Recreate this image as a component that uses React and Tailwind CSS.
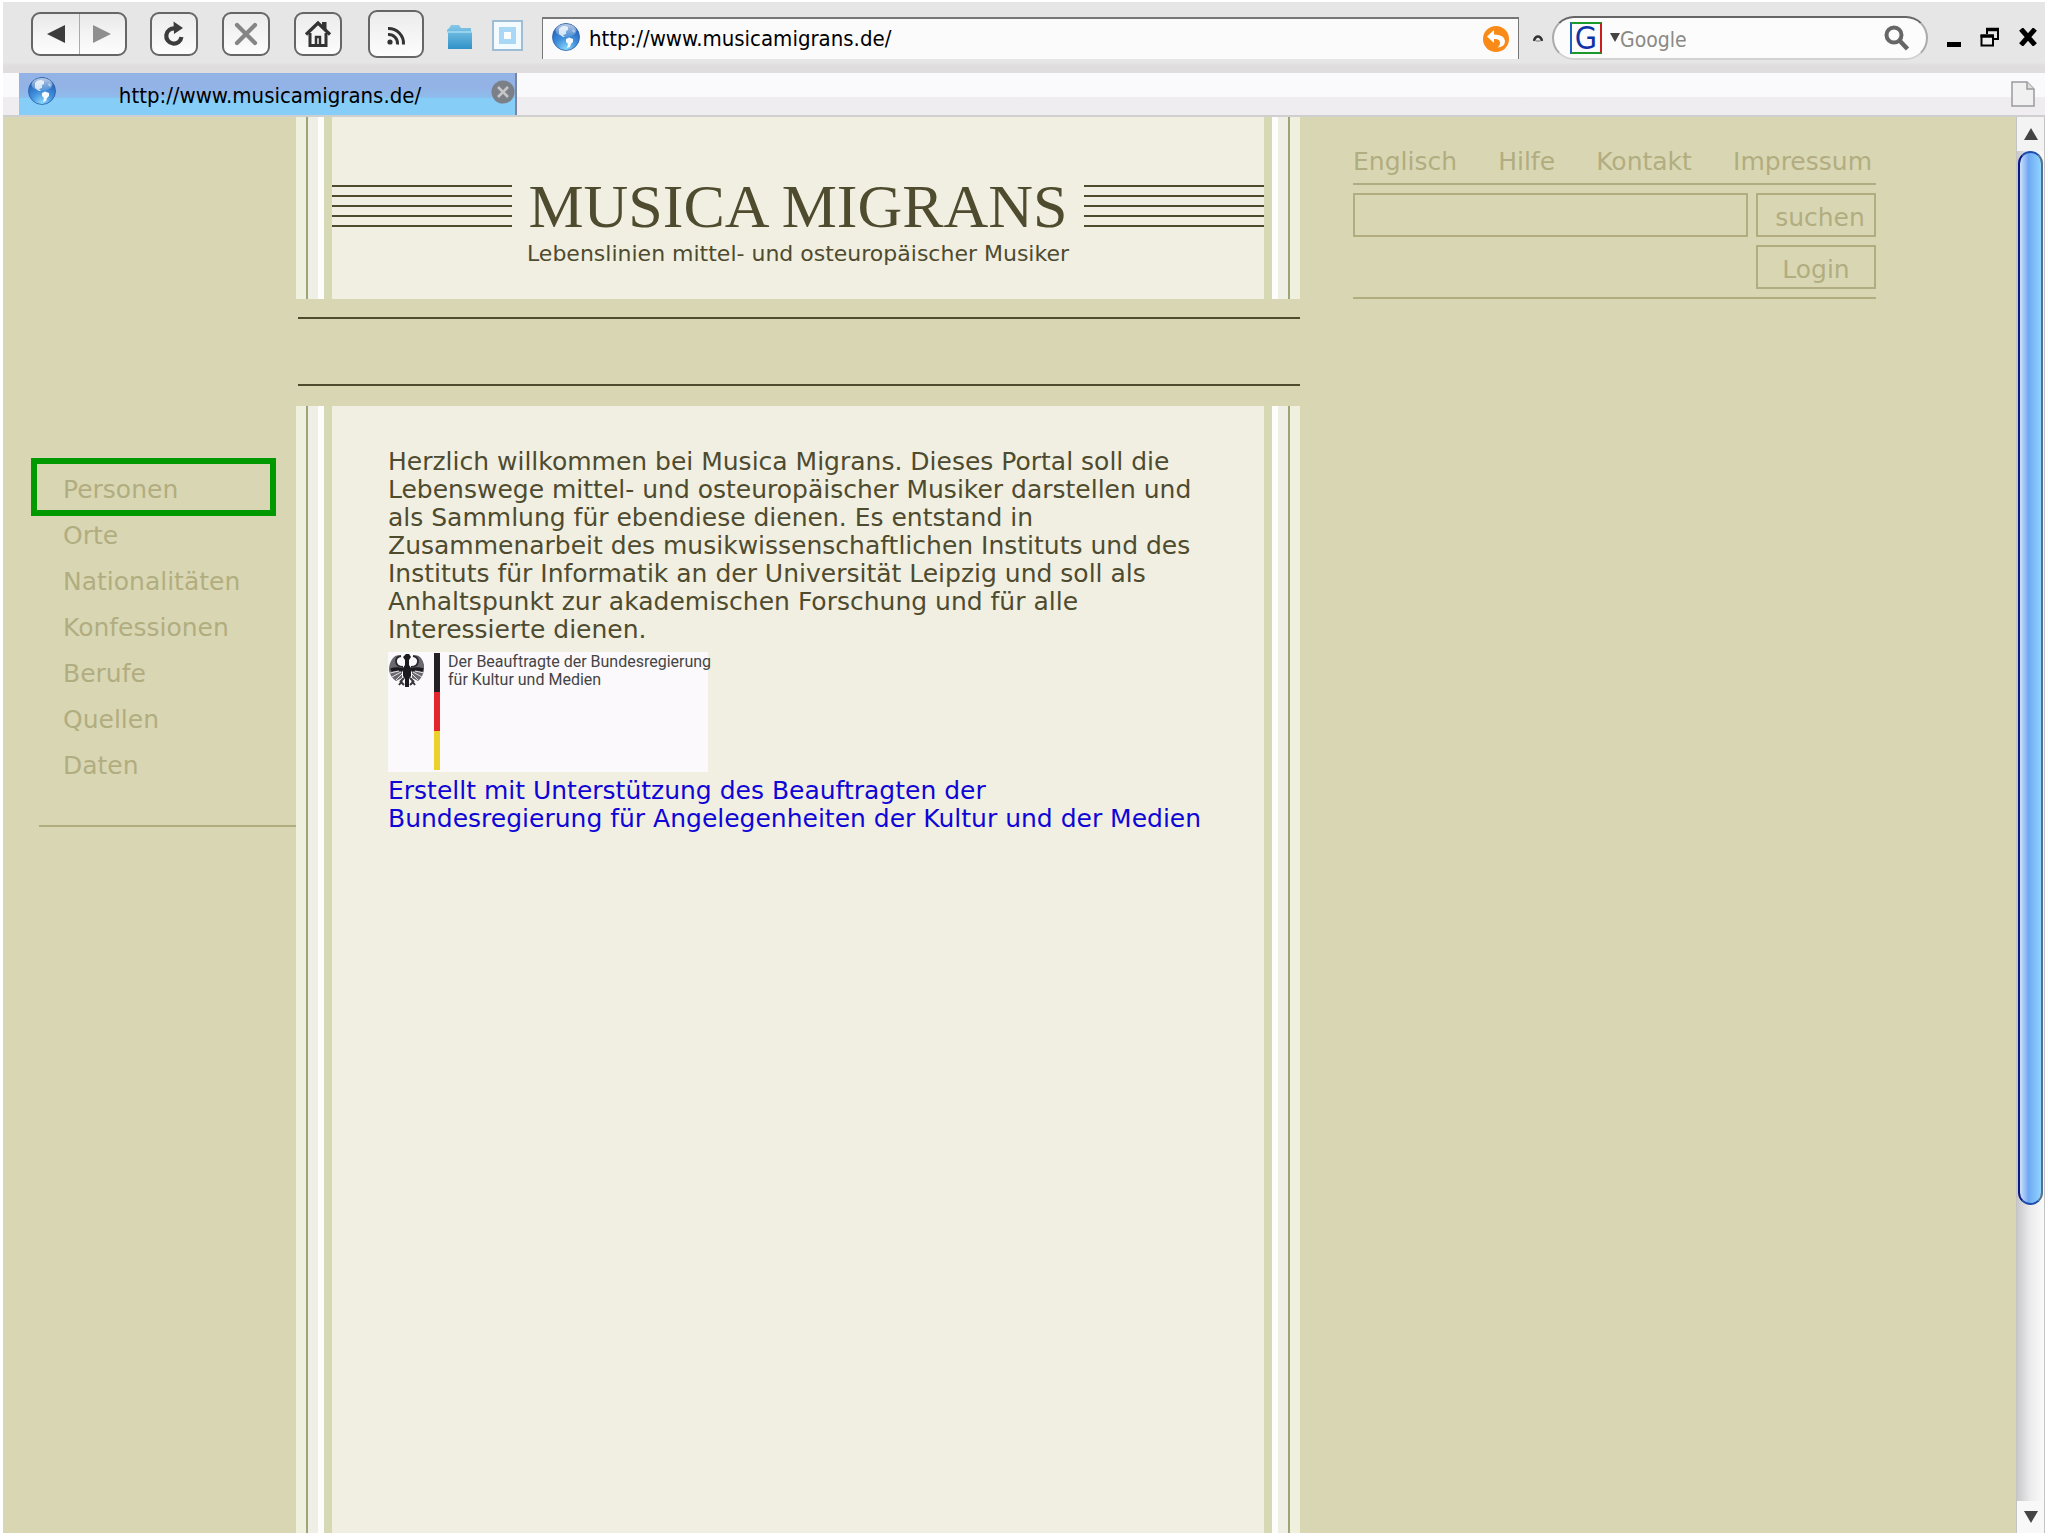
import React from 'react';

const navItems = ['Personen', 'Orte', 'Nationalitäten', 'Konfessionen', 'Berufe', 'Quellen', 'Daten'];
const metaLinks = ['Englisch', 'Hilfe', 'Kontakt', 'Impressum'];

function Globe({ id, className = '' }) {
  return (
    <svg viewBox="0 0 30 30" className={`w-[30px] h-[30px] shrink-0 ${className}`} aria-hidden="true">
      <defs>
        <radialGradient id={id} cx="50%" cy="95%" r="95%">
          <stop offset="0" stopColor="#8ad8fc" />
          <stop offset="0.45" stopColor="#3f8fdc" />
          <stop offset="1" stopColor="#1f56ac" />
        </radialGradient>
        <linearGradient id={`${id}Shine`} x1="0" y1="0" x2="0" y2="1">
          <stop offset="0" stopColor="#fff" stopOpacity="0.7" />
          <stop offset="1" stopColor="#fff" stopOpacity="0.1" />
        </linearGradient>
      </defs>
      <circle cx="15" cy="15" r="13.500" fill={`url(#${id})`} stroke="#2b5da8" strokeWidth="0.800" />
      <path d="M8 7 Q10 4 14 4 L17 5 L17 8 L15 9 L15 12 L12 13 L14 15 L12 15 L8 12 Z" fill="#e4f2fc" opacity="0.85" />
      <path d="M15 17 L18 15.500 L22 17 L22 20 L20 22 L19 25 L16 26 L17 22 L15 20 Z" fill="#f4faff" />
      <path d="M22 7 L24 9 L23 11 L21 9 Z" fill="#b9dcf7" opacity="0.6" />
      <ellipse cx="15" cy="8.500" rx="10.500" ry="6.500" fill={`url(#${id}Shine)`} />
    </svg>
  );
}

function ToolButton({ label, className = '', children }) {
  return (
    <button
      aria-label={label}
      className={`flex items-center justify-center shrink-0 rounded-[9px] border-2 border-[#666] bg-linear-to-b from-[#ececec] via-[#f4f4f4] to-[#fdfdfd] ${className}`}
    >
      {children}
    </button>
  );
}

function Toolbar() {
  return (
    <div className="flex items-center h-[71px] pl-7 pr-2 pb-[2px] bg-linear-to-b from-[#e6e6e6] from-85% to-[#dfddde] to-90%">
      <div className="flex items-center mb-[6px]">
        <div className="flex w-24 h-11 rounded-[9px] border-2 border-[#666] bg-linear-to-b from-[#e9e9e9] via-[#f4f4f4] to-[#fdfdfd]">
          <button aria-label="Zurück" className="flex-1 flex items-center justify-center border-r border-[#aaa]">
            <svg viewBox="0 0 18 18" className="w-[18px] h-[18px]"><path d="M0 9 L18 0 V18 Z" fill="#3c3c3c" /></svg>
          </button>
          <button aria-label="Vorwärts" className="flex-1 flex items-center justify-center">
            <svg viewBox="0 0 18 18" className="w-[18px] h-[18px]"><path d="M18 9 L0 0 V18 Z" fill="#8f8f8f" /></svg>
          </button>
        </div>
        <ToolButton label="Neu laden" className="ml-[23px] w-12 h-11">
          <svg viewBox="0 0 24 26" className="w-6 h-[26px]">
            <path d="M13 7.500 A7.600 7.600 0 1 0 19.400 16" fill="none" stroke="#3c3c3c" strokeWidth="4.200" />
            <path d="M11.500 0.500 L21 7 L12 13 Z" fill="#3c3c3c" />
          </svg>
        </ToolButton>
        <ToolButton label="Anhalten" className="ml-6 w-12 h-11">
          <svg viewBox="0 0 24 24" className="w-6 h-6">
            <path d="M3 3 L21 21 M21 3 L3 21" stroke="#858585" strokeWidth="4.200" strokeLinecap="round" />
          </svg>
        </ToolButton>
        <ToolButton label="Startseite" className="ml-6 w-12 h-11">
          <svg viewBox="0 0 28 28" className="w-7 h-7">
            <path d="M2 14.500 L14 3 L26 14.500" fill="none" stroke="#333" strokeWidth="3.200" />
            <path d="M6 13 V25.500 H22 V13" fill="none" stroke="#333" strokeWidth="3" />
            <path d="M12 26 V17 H16 V26" fill="none" stroke="#333" strokeWidth="2.500" />
            <path d="M18 2 H22.500 V10 L18 6 Z" fill="#333" />
          </svg>
        </ToolButton>
        <ToolButton label="Feeds" className="ml-[26px] w-14 h-12">
          <svg viewBox="0 0 20 20" className="w-5 h-5 mt-1">
            <circle cx="4" cy="16" r="2.600" fill="#333" />
            <path d="M2 8.500 A9 9 0 0 1 11.500 18.500 M2 2.500 A15 15 0 0 1 17.500 18.500" fill="none" stroke="#333" strokeWidth="3" />
          </svg>
        </ToolButton>
      </div>
      <button aria-label="Ordner" className="ml-[22px] shrink-0">
        <svg viewBox="0 0 28 26" className="w-7 h-[26px]">
          <defs>
            <linearGradient id="folder" x1="0" y1="0" x2="0" y2="1">
              <stop offset="0" stopColor="#86c8e8" />
              <stop offset="1" stopColor="#2f92c8" />
            </linearGradient>
          </defs>
          <path d="M1 6 L4 3 L5 1 H13 L15 4 H25 V8 H26 V25 H2 V8 H1 Z" fill="url(#folder)" />
          <path d="M1 8 H26" stroke="#a5dbf2" strokeWidth="1.500" />
        </svg>
      </button>
      <button aria-label="Lesezeichen" className="ml-[18px] shrink-0 flex items-center justify-center w-[31px] h-[31px] mb-[2px] border-2 border-[#9dbdd6] bg-[#f3fbff]">
        <span className="w-[17px] h-[17px] border-[5px] border-[#a9d8f6] bg-white" />
      </button>
      <div className="flex-1 flex items-center gap-2 ml-[19px] mt-[2px] h-[42px] px-2 border-t-2 border-x border-[#777] bg-[#fbfbfb]">
        <Globe id="globeBar" className="mb-1" />
        <input
          aria-label="Adresse"
          defaultValue="http://www.musicamigrans.de/"
          className="flex-1 min-w-0 bg-transparent text-[22px] leading-7 text-black outline-none"
        />
        <button aria-label="Wechseln zu" className="shrink-0">
          <svg viewBox="0 0 28 28" className="w-7 h-7">
            <circle cx="14" cy="14" r="13" fill="#f98a17" />
            <path d="M12 5 L5 11.500 L12 18 V14 Q18 13.500 18 18 Q18 21 15 22.500 Q23 22 23 16 Q22.500 9.500 12 9.500 Z" fill="#fff" />
          </svg>
        </button>
      </div>
      <svg viewBox="0 0 10 8" className="ml-[14px] mt-1 w-[10px] h-2 shrink-0"><path d="M1 6 Q2 1.500 5 1.500 Q8 1.500 9 6" fill="none" stroke="#333" strokeWidth="2.500" /><path d="M3 6 H7" stroke="#999" strokeWidth="1.500" /></svg>
      <div className="flex items-center ml-[9px] mt-[2px] w-[376px] h-[44px] px-4 shrink-0 rounded-full border-2 border-t-[#666] border-x-[#aaa] border-b-[#d2d2d2] bg-[#fcfcfc]">
        <span className="flex items-center justify-center w-8 h-8 shrink-0 border-2 border-l-[#1f5fc0] border-y-[#1a9a2c] border-r-[#c81e1e] text-[32px] leading-7 text-[#1233a8]">G</span>
        <svg viewBox="0 0 10 9" className="ml-2 w-[10px] h-[9px] shrink-0"><path d="M0 0 H10 L5 9 Z" fill="#444" /></svg>
        <input
          aria-label="Suche"
          placeholder="Google"
          className="flex-1 min-w-0 mt-1 bg-transparent text-[21px] leading-7 placeholder:text-[#8a8a84] outline-none"
        />
        <button aria-label="Suchen" className="shrink-0">
          <svg viewBox="0 0 26 26" className="w-[26px] h-[26px]">
            <circle cx="10" cy="10" r="7.500" fill="none" stroke="#666" strokeWidth="4" />
            <path d="M15.500 15.500 L23.500 24" stroke="#666" strokeWidth="4.500" />
          </svg>
        </button>
      </div>
      <div className="flex items-center gap-[19px] ml-[19px] shrink-0">
        <button aria-label="Minimieren" className="w-[14px] h-5 flex items-end"><span className="w-[14px] h-[5px] bg-black" /></button>
        <button aria-label="Wiederherstellen">
          <svg viewBox="0 0 20 20" className="w-5 h-5">
            <path d="M7 7 V2 H18 V12 H14" fill="none" stroke="#000" strokeWidth="2" />
            <path d="M6 2.500 H19" stroke="#000" strokeWidth="3.500" />
            <path d="M1.500 9 H13 V18.500 H1.500 Z" fill="#eee" stroke="#000" strokeWidth="2" />
            <path d="M0.500 9 H14" stroke="#000" strokeWidth="3.500" />
          </svg>
        </button>
        <button aria-label="Schließen">
          <svg viewBox="0 0 18 18" className="w-[18px] h-[18px]"><path d="M2 1 L16 17 M16 1 L2 17" stroke="#000" strokeWidth="5" /></svg>
        </button>
      </div>
    </div>
  );
}

function TabBar() {
  return (
    <div className="flex items-stretch h-11 pl-4 pr-[10px] border-b-2 border-[#cfcfcf] bg-linear-to-b from-[#fafafd] from-58% to-[#efedf0] to-58%">
      <div className="flex items-center w-[498px] pl-2 border-r-2 border-[#7a86a0] bg-linear-to-b from-[#93b3e6] from-35% via-[#8dbcec] via-58% to-[#86cdf7] to-60%">
        <Globe id="globeTab" className="mb-[6px]" />
        <button className="flex-1 text-center pr-2 pt-1 text-[22px] leading-7 text-black">http://www.musicamigrans.de/</button>
        <button aria-label="Tab schließen" className="mb-1 shrink-0">
          <svg viewBox="0 0 24 24" className="w-6 h-6">
            <circle cx="12" cy="12" r="11.500" fill="#7b8088" />
            <path d="M7 7 L17 17 M17 7 L7 17" stroke="#c6c6c6" strokeWidth="2.500" />
          </svg>
        </button>
      </div>
      <button aria-label="Neue Seite" className="ml-auto">
        <svg viewBox="0 0 24 26" className="w-6 h-[26px]">
          <path d="M1 1 H16 L23 8 V25 H1 Z" fill="#f0f0f0" stroke="#9a9a9e" strokeWidth="1.500" />
          <path d="M16 1 V8 H23" fill="#ddd" stroke="#9a9a9e" strokeWidth="1.500" />
        </svg>
      </button>
    </div>
  );
}

function Sidebar() {
  return (
    <nav className="w-[293px] shrink-0 pt-[341px]">
      <ul className="pl-7">
        {navItems.map((item, i) => (
          <li key={item}>
            {i === 0 ? (
              <a href="#personen" className="flex items-center w-[245px] h-[58px] pl-[26px] pt-[6px] -mb-[3px] border-6 border-[#009900]">{item}</a>
            ) : (
              <a href={`#${item.toLowerCase()}`} className="flex items-center h-[46px] pl-8">{item}</a>
            )}
          </li>
        ))}
      </ul>
      <hr className="mt-9 ml-9 border-t-2 border-[#b2ad80]" />
    </nav>
  );
}

// the vertical stripes running along both sides of the page column
function Stripes({ side }) {
  return (
    <div aria-hidden="true" className={side === 'left' ? 'flex shrink-0' : 'flex flex-row-reverse shrink-0'}>
      <div className="w-[10px] bg-[#eff0de]" />
      <div className="w-[2px] bg-[#9ba578]" />
      <div className="w-[10px] bg-[#f0efe6]" />
      <div className="w-[6px] bg-[#fdfdfb]" />
      <div className="w-2 bg-[#d7d9b4]" />
    </div>
  );
}

function StaffLines() {
  return (
    <div aria-hidden="true" className="w-[180px] flex flex-col gap-2">
      <div className="h-[2px] bg-[#4e4b2f]" />
      <div className="h-[2px] bg-[#4e4b2f]" />
      <div className="h-[2px] bg-[#4e4b2f]" />
      <div className="h-[2px] bg-[#4e4b2f]" />
      <div className="h-[2px] bg-[#4e4b2f]" />
    </div>
  );
}

function Eagle() {
  return (
    <svg viewBox="0 0 36 36" className="w-9 h-9 shrink-0" aria-hidden="true">
      <path d="M14 15 Q8 14 8 8 Q8 4 13 3 Q8 1 5 5 Q1 10 1 17 Q2 24 8 28 L14 25 Z" fill="#6a686e" />
      <path d="M24 15 Q30 14 30 8 Q30 4 25 3 Q30 1 33 5 Q37 10 36 17 Q35 24 30 28 L24 25 Z" fill="#6a686e" />
      <path d="M13 3 Q8 4 8 8 Q8 14 15 14 M25 3 Q30 4 30 8 Q30 14 23 14" fill="none" stroke="#2a282e" strokeWidth="1.800" />
      <path d="M3 17 Q9 15 15 17 M35 17 Q29 15 23 17" fill="none" stroke="#1c1a1e" strokeWidth="3.500" />
      <path d="M2 20 L11 18 M4 24 L13 19 M8 27 L14 21 M36 20 L27 18 M34 24 L25 19 M30 27 L24 21" stroke="#e4e2e6" strokeWidth="1" />
      <path d="M17 7 L15 4 L18 1 H21 L23 4 L21 7 V12 L23 15 V23 L21 26 V34 H17 V26 L15 23 V15 L17 12 Z" fill="#1c1a1e" />
      <path d="M16 25 L12 29 M14 28 L11 32 M13 29 L16 32 M22 25 L26 29 M24 28 L27 32 M25 29 L22 32" stroke="#3a383e" strokeWidth="2" />
    </svg>
  );
}

function SponsorLogo() {
  return (
    <div className="flex mt-2 w-80 h-[120px] pt-px bg-[#fbf9fb]">
      <Eagle />
      <div aria-hidden="true" className="flex flex-col ml-[10px] w-[6px] h-[117px] shrink-0">
        <div className="flex-1 bg-[#231f22]" />
        <div className="flex-1 bg-[#e3262c]" />
        <div className="flex-1 bg-[#ecd02c]" />
      </div>
      <p className="ml-2 font-['Roboto',sans-serif] text-[16px] leading-[18px] text-[#444] whitespace-nowrap">
        Der Beauftragte der Bundesregierung<br />
        für Kultur und Medien
      </p>
    </div>
  );
}

function PageColumn() {
  return (
    <div className="w-[1004px] shrink-0 flex flex-col text-[#4e4b2f]">
      <header className="flex h-[182px]">
        <Stripes side="left" />
        <div className="flex-1 bg-[#f1efe1] pt-[57px]">
          <div className="flex items-center justify-between h-[64px]">
            <StaffLines />
            <h1 className="font-['Liberation_Serif',serif] text-[62px] leading-[64px] whitespace-nowrap">MUSICA MIGRANS</h1>
            <StaffLines />
          </div>
          <p className="text-center text-[22px] leading-6 mt-1">Lebenslinien mittel- und osteuropäischer Musiker</p>
        </div>
        <Stripes side="right" />
      </header>
      <div className="mt-[18px] mb-5 ml-[2px] h-[69px] border-y-2 border-[#4e4b2f]" />
      <main className="flex-1 flex">
        <Stripes side="left" />
        <div className="flex-1 bg-[#f1efe1] pl-14 pt-[42px] leading-7">
          <p>
            Herzlich willkommen bei Musica Migrans. Dieses Portal soll die<br />
            Lebenswege mittel- und osteuropäischer Musiker darstellen und<br />
            als Sammlung für ebendiese dienen. Es entstand in<br />
            Zusammenarbeit des musikwissenschaftlichen Instituts und des<br />
            Instituts für Informatik an der Universität Leipzig und soll als<br />
            Anhaltspunkt zur akademischen Forschung und für alle<br />
            Interessierte dienen.
          </p>
          <SponsorLogo />
          <a href="#bkm" className="block mt-[5px] text-[#0f05d6] whitespace-nowrap">
            Erstellt mit Unterstützung des Beauftragten der<br />
            Bundesregierung für Angelegenheiten der Kultur und der Medien
          </a>
        </div>
        <Stripes side="right" />
      </main>
    </div>
  );
}

function SearchPanel() {
  return (
    <aside className="flex-1 pl-[53px] pt-7">
      <div className="w-[523px]">
        <div className="flex justify-between h-[40px] pt-px pr-1 leading-8 border-b-2 border-[#b2ad80]">
          {metaLinks.map((link) => (
            <a key={link} href={`#${link.toLowerCase()}`}>{link}</a>
          ))}
        </div>
        <form className="grid grid-cols-[1fr_120px] gap-2 py-2 border-b-2 border-[#b2ad80]">
          <input aria-label="Suchbegriff" className="h-11 min-w-0 px-2 border-2 border-[#b2ad80] bg-transparent outline-none" />
          <button type="button" className="h-11 pt-1 pl-2 border-2 border-[#b2ad80]">suchen</button>
          <button type="button" className="h-11 pt-1 col-start-2 border-2 border-[#b2ad80]">Login</button>
        </form>
      </div>
    </aside>
  );
}

function Scrollbar() {
  return (
    <div className="flex flex-col w-[29px] shrink-0 border-x border-[#c4c4c4] bg-linear-to-r from-[#c9c9cc] via-[#ececec] via-50% to-[#fafafa]">
      <button aria-label="Nach oben" className="flex items-center justify-center h-[34px] bg-[#f3f3f3]">
        <svg viewBox="0 0 14 12" className="w-[14px] h-3"><path d="M7 0 L14 12 H0 Z" fill="#444" /></svg>
      </button>
      <div className="flex-[78] mx-px rounded-full border-2 border-l-[#0a1a80] border-y-[#1c4cae] border-r-[#55708c] bg-linear-to-r from-[#cfe0fb] via-[#6fa8f2] via-40% to-[#8fd4ff]" />
      <div className="flex-[22]" />
      <button aria-label="Nach unten" className="flex items-center justify-center h-8 bg-[#f8f8f8]">
        <svg viewBox="0 0 14 12" className="w-[14px] h-3"><path d="M7 12 L14 0 H0 Z" fill="#444" /></svg>
      </button>
    </div>
  );
}

export default function App() {
  return (
    <div className="flex flex-col min-h-screen pt-[2px] px-[3px] pb-[3px] bg-white font-['DejaVu_Sans_Condensed','DejaVu_Sans',sans-serif]">
      <Toolbar />
      <TabBar />
      <div className="flex-1 flex bg-[#d9d7b3] font-['DejaVu_Sans',sans-serif] text-[25px] text-[#b2ad80]">
        <Sidebar />
        <PageColumn />
        <SearchPanel />
        <Scrollbar />
      </div>
    </div>
  );
}
